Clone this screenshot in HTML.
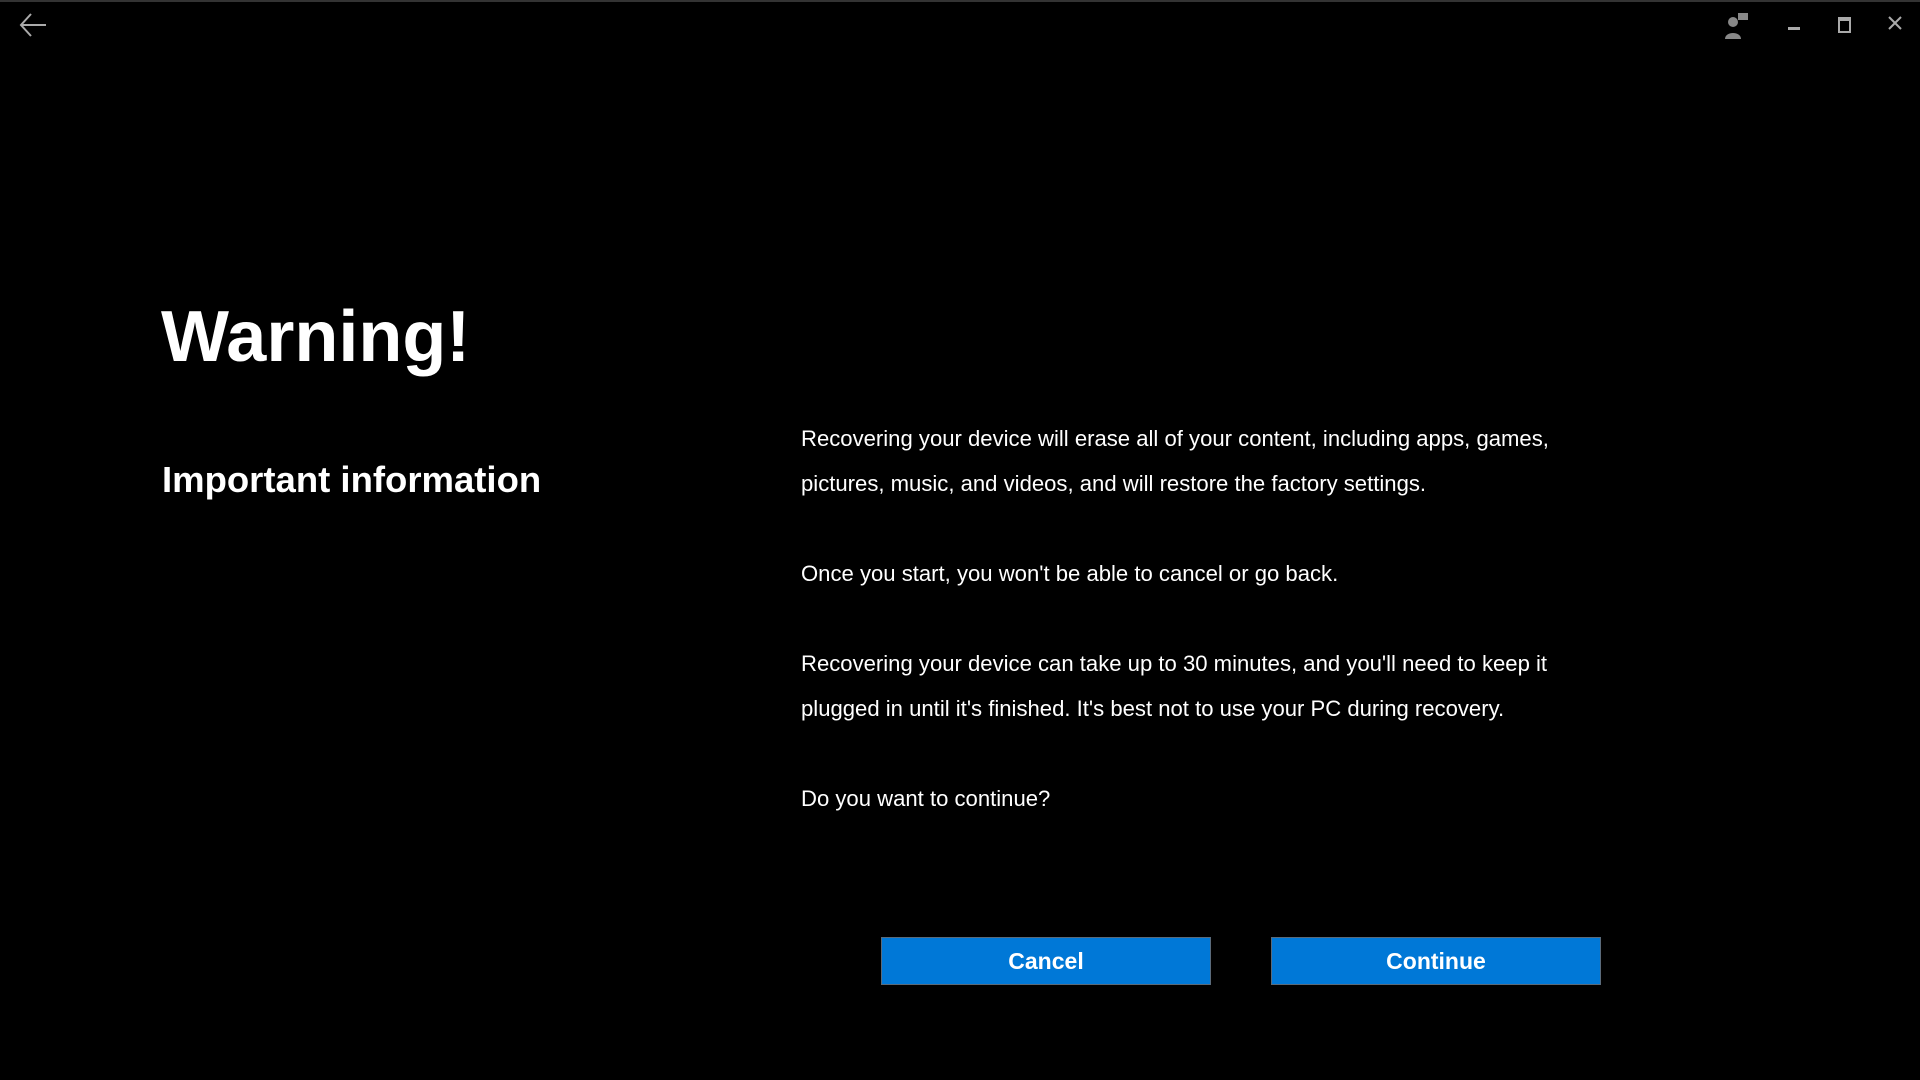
<!DOCTYPE html>
<html><head><style>
html,body{margin:0;width:1920px;height:1080px;background:#000;overflow:hidden;font-family:"Segoe UI","Liberation Sans",sans-serif;color:#fff}
.a{position:absolute;white-space:nowrap}
h1{position:absolute;left:161px;top:301px;margin:0;font-size:72px;font-weight:bold;line-height:1}
h2{position:absolute;left:162px;top:462px;margin:0;font-size:36.5px;font-weight:bold;line-height:1}
.p{position:absolute;left:801px;font-size:22.1px;line-height:45px}
.btn{position:absolute;top:937px;width:328px;height:46px;background:#0078d7;border:1px solid #5a6a7a;font-weight:bold;font-size:23px;text-align:center;line-height:46px}
</style></head><body>
<div style="position:absolute;left:0;top:0;width:1920px;height:2px;background:#333"></div>
<svg class="a" style="left:18px;top:12px" width="30" height="26" viewBox="0 0 30 26"><path d="M13 2 L3 13 L13 24 M3 13 H28" stroke="#aaa" stroke-width="2" fill="none"/></svg>
<svg class="a" style="left:1724px;top:12px" width="26" height="28" viewBox="0 0 26 28"><circle cx="9" cy="10" r="5" fill="#888"/><path d="M1 27 C1 19 17 19 17 27Z" fill="#888"/><rect x="14" y="1" width="10" height="7" fill="#888"/></svg>
<div class="a" style="left:1788px;top:27px;width:12px;height:3px;background:#aaa"></div>
<div class="a" style="left:1838px;top:17px;width:9px;height:10px;border:2px solid #aaa;border-top-width:4px"></div>
<svg class="a" style="left:1888px;top:16px" width="14" height="14" viewBox="0 0 14 14"><path d="M1 1 L13 13 M13 1 L1 13" stroke="#aaa" stroke-width="2"/></svg>
<h1>Warning!</h1>
<h2>Important information</h2>
<div class="p" style="top:416px">Recovering your device will erase all of your content, including apps, games,<br>pictures, music, and videos, and will restore the factory settings.</div>
<div class="p" style="top:551px">Once you start, you won't be able to cancel or go back.</div>
<div class="p" style="top:641px">Recovering your device can take up to 30 minutes, and you'll need to keep it<br>plugged in until it's finished. It's best not to use your PC during recovery.</div>
<div class="p" style="top:776px">Do you want to continue?</div>
<div class="btn" style="left:881px">Cancel</div>
<div class="btn" style="left:1271px">Continue</div>
</body></html>
